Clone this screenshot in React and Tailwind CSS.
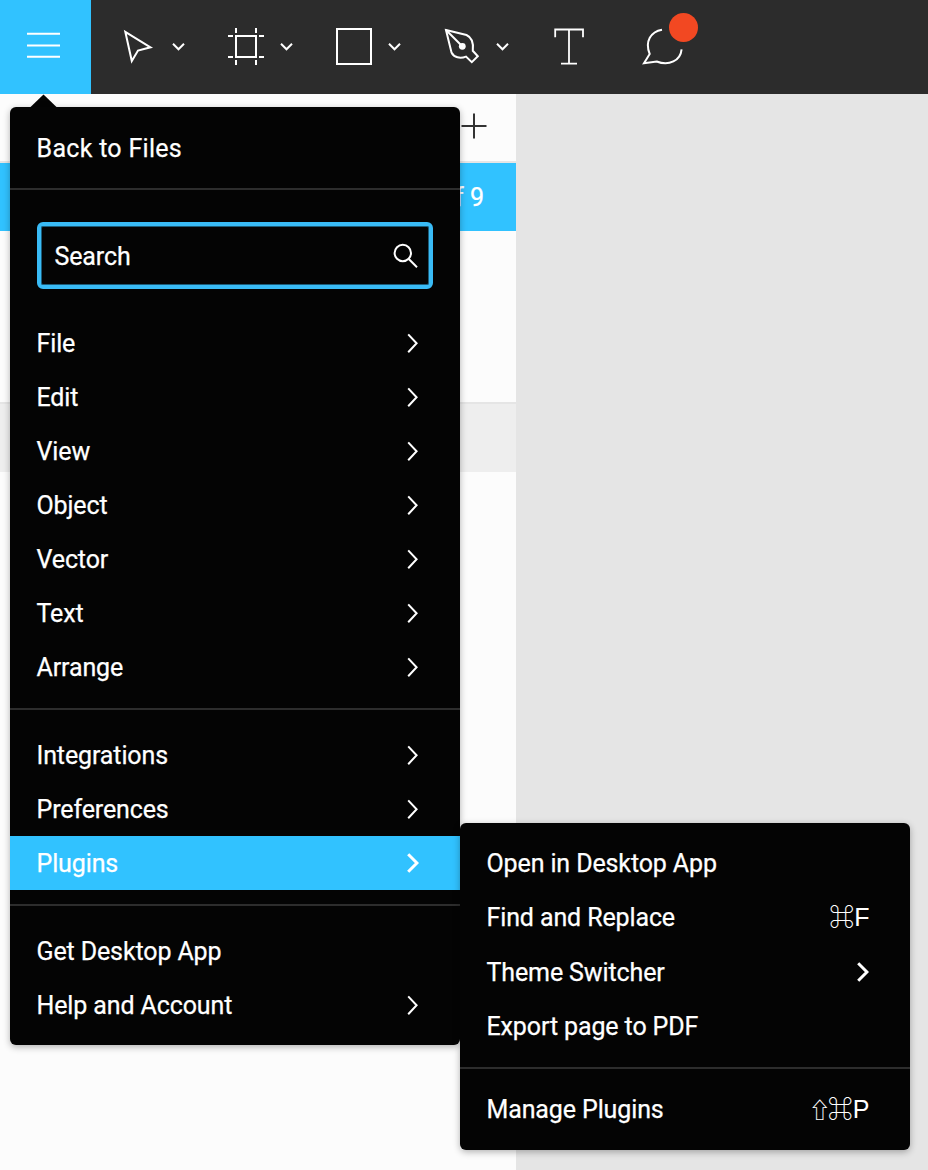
const fileItems = ['File', 'Edit', 'View', 'Object', 'Vector', 'Text', 'Arrange'];

function Chevron({ bold = false }) {
  return (
    <svg className="mr-px h-5 w-3 shrink-0" viewBox="0 0 12 20" fill="none" stroke="#fff" strokeWidth={bold ? 3 : 2}>
      {bold ? (
        <path d="M1.2 1.2L9.9 10L1.2 18.7" />
      ) : (
        <path d="M1.2 1.4L9.6 10.3L1.2 19.2" />
      )}
    </svg>
  );
}

function DownChevron() {
  return (
    <svg className="ml-[15px] h-10 w-4" viewBox="0 0 16 40" fill="none" stroke="#fff" strokeWidth="2">
      <path d="M2 16.8L7.5 22.3L13 16.8" />
    </svg>
  );
}

function Tool({ children }) {
  return (
    <div className="flex w-[108px] shrink-0 items-center">
      <svg className="h-10 w-9" viewBox="0 0 36 40" fill="none" stroke="#fff" strokeWidth="2">
        {children}
      </svg>
      <DownChevron />
    </div>
  );
}

function Item({ label, arrow, bold, active, height = 'h-[54px]', spacing = 'tracking-[-0.12px]', children }) {
  return (
    <div className={`flex shrink-0 items-center justify-between pl-[26.5px] pr-[40px] ${height} ${active ? 'bg-[#31c2ff]' : ''}`}>
      <span className={`pt-[2px] ${spacing}`}>{label}</span>
      {arrow && <Chevron bold={bold} />}
      {children}
    </div>
  );
}

function Divider({ className = '' }) {
  return <div className={`h-[2px] shrink-0 bg-[#2d2d2d] ${className}`} />;
}

function Shortcut({ shift, letter }) {
  return (
    <span className="mr-[0.5px] pt-px font-['Liberation_Sans','Noto_Sans_CJK_JP',sans-serif] text-[25px] font-medium leading-none [-webkit-text-stroke:0]">
      {shift && <span className="text-[22px] tracking-[-3px]">⇧</span>}
      ⌘{letter}
    </span>
  );
}

export default function App() {
  return (
    <div className="relative flex h-[1170px] w-[928px] flex-col overflow-hidden bg-[#e5e5e5] font-[Roboto,sans-serif] text-[25px] leading-[52px] text-white [-webkit-text-stroke:0.25px_#fff]">
      <header className="flex h-[94px] shrink-0 items-center bg-[#2c2c2c]">
        <div className="flex h-full w-[91px] items-center bg-[#31c2ff] pl-[27px]">
          <svg className="h-10 w-[33px]" viewBox="0 0 33 40" stroke="#fff" strokeWidth="2">
            <path d="M0 6.8H33M0 18.4H33M0 29.8H33" />
          </svg>
        </div>
        <div className="flex items-center pl-[29px]">
          <Tool>
            <path d="M5.3 4.8L30.5 20.3L18 23.6L11.8 34Z" />
          </Tool>
          <Tool>
            <path d="M8 9H28V30H8ZM8 1V6M28 1V6M8 33V38M28 33V38M0 9H5M31 9H36M0 30H5M31 30H36" />
          </Tool>
          <Tool>
            <path d="M1 2H35V37H1Z" />
          </Tool>
          <Tool>
            <path d="M2 3L22.5 8C27 10 30 14 28.8 23.8L33.8 29.2L27.8 35.2L22 29.6C16 32 10 30.5 7.5 25.5Z" />
            <path d="M2 3L18 19" />
            <circle cx="18.3" cy="19.3" r="3.4" fill="#fff" stroke="none" />
          </Tool>
          <svg className="h-10 w-9" viewBox="0 0 36 40" fill="none" stroke="#fff" strokeWidth="1.8">
            <path d="M3.2 10.3V2.5H31V10.3M17 2.5V36.6M9 36.6H25" />
          </svg>
          <svg className="ml-[54px] h-[60px] w-[60px] overflow-visible" viewBox="0 0 60 60" fill="none" stroke="#fff" strokeWidth="2">
            <path d="M20 12.7C9 14.5 2.5 24.5 7.7 37L2 46.3L14.7 44.5C27 49.5 38.5 43.5 39.6 32.3" />
            <circle cx="41.5" cy="10.5" r="14.5" fill="#f24822" stroke="none" />
          </svg>
        </div>
      </header>

      <aside className="flex w-[516px] grow flex-col bg-[#fcfcfc]">
        <div className="flex h-[69px] shrink-0 items-center justify-end border-b-2 border-[#e5e5e5] pb-[3px] pr-[29px]">
          <svg className="h-[26px] w-[26px]" viewBox="0 0 26 26" stroke="#333" strokeWidth="2">
            <path d="M0.5 13H25.5M13 0.5V25.5" />
          </svg>
        </div>
        <div className="flex h-[68px] shrink-0 items-center justify-end bg-[#31c2ff] pr-8 pt-[2px]">
          <span>1 of 9</span>
        </div>
        <div className="mt-[171px] h-[70px] shrink-0 border-t-2 border-[#e5e5e5] bg-[#eee]" />
      </aside>

      <svg className="absolute left-[30px] top-[94px] h-[14px] w-[27px]" viewBox="0 0 27 14">
        <path d="M0 14V13.4L13.5 0.5L27 13.4V14Z" fill="#040404" />
      </svg>
      <nav className="absolute left-[10px] top-[107px] flex h-[938px] w-[450px] flex-col rounded-[6px] bg-[#040404] pt-[14px] shadow-[0_2px_7px_rgba(0,0,0,0.3)]">
        <Item label="Back to Files" spacing="tracking-[0.3px]" />
        <Divider className="mt-[13px]" />
        <div className="mx-[27px] mb-[27px] mt-8 flex h-[67px] shrink-0 items-center justify-between rounded-[6px] border-4 border-[#39bbf6] pl-[13.5px] pr-[11px] shadow-[inset_0_0_0_1px_#1c5d7a]">
          <span className="pt-[2px] tracking-[-0.12px]">Search</span>
          <svg className="h-[26px] w-[26px]" viewBox="0 0 26 26" fill="none" stroke="#fff" strokeWidth="2">
            <circle cx="10.8" cy="10" r="8.2" />
            <path d="M16.8 16L25 24.2" />
          </svg>
        </div>
        {fileItems.map((label) => (
          <Item key={label} label={label} arrow />
        ))}
        <Divider className="mb-[18px] mt-[14px]" />
        <Item label="Integrations" arrow />
        <Item label="Preferences" arrow />
        <Item label="Plugins" arrow bold active />
        <Divider className="mb-[18px] mt-[14px]" />
        <Item label="Get Desktop App" />
        <Item label="Help and Account" arrow />
      </nav>

      <nav className="absolute left-[460px] top-[823px] flex h-[327px] w-[450px] flex-col rounded-[6px] bg-[#040404] pt-[13px] shadow-[0_2px_7px_rgba(0,0,0,0.3)]">
        <Item label="Open in Desktop App" />
        <Item label="Find and Replace" height="h-[54px]">
          <Shortcut letter="F" />
        </Item>
        <Item label="Theme Switcher" arrow bold height="h-[55px]" />
        <Item label="Export page to PDF" height="h-[54px]" />
        <Divider className="mb-[13px] mt-[14px]" />
        <Item label="Manage Plugins">
          <Shortcut shift letter="P" />
        </Item>
      </nav>
    </div>
  );
}
